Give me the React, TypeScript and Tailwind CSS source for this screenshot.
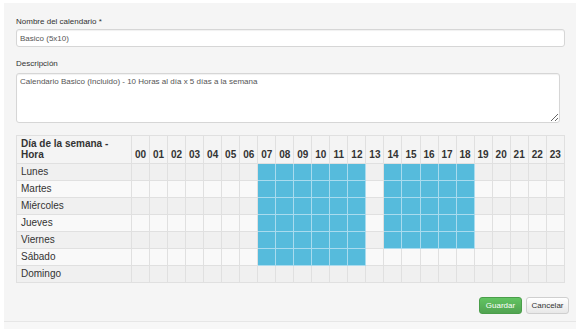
import React from "react";

const days = ["Lunes", "Martes", "Miércoles", "Jueves", "Viernes", "Sábado", "Domingo"];
const hours = Array.from({ length: 24 }, (_, i) => (i < 10 ? "0" + i : "" + i));

function isOn(d: number, h: number) {
  if (d <= 5 && h >= 7 && h <= 12) return true;
  if (d <= 4 && h >= 14 && h <= 18) return true;
  return false;
}

export default function App() {
  return (
    <div
      className="w-[580px] h-[329px] bg-white pt-[3px] px-[4px] overflow-hidden text-[#333]"
      style={{ fontFamily: '"Liberation Sans", Arial, sans-serif' }}
    >
      <div className="bg-[#f5f5f5] h-[318px] pl-[12px] pr-[11px] pt-[14px] flex flex-col">
        <div className="text-[8px] leading-[10px] text-[#333]">Nombre del calendario *</div>
        <input
          className="mt-[2px] h-[18px] w-full bg-white border border-[#d6d6d6] rounded-[3px] px-[3px] text-[8px] text-[#555] shadow-[inset_0_1px_1px_rgba(0,0,0,0.06)] outline-none"
          defaultValue="Basico (5x10)"
        />
        <div className="mt-[12px] text-[8px] leading-[10px] text-[#333]">Descripción</div>
        <textarea
          className="mt-[4px] h-[50px] w-[544px] bg-white border border-[#d6d6d6] rounded-[3px] px-[3px] py-[3px] text-[8px] leading-[10px] text-[#555] shadow-[inset_0_1px_1px_rgba(0,0,0,0.06)] outline-none resize"
          defaultValue="Calendario Basico (Incluido) - 10 Horas al día x 5 días a la semana"
        />
        <table className="mt-[12px] w-full table-fixed border-collapse border border-[#dddddd]">
          <colgroup>
            <col className="w-[115px]" />
            {hours.map((h) => (
              <col key={h} />
            ))}
          </colgroup>
          <thead>
            <tr className="h-[28px] bg-[#f4f4f4]">
              <th className="border border-[#e0e0e0] text-left align-bottom px-[4px] pb-[3px] text-[10px] leading-[10.5px] font-bold text-[#333]">
                Día de la semana -<br />Hora
              </th>
              {hours.map((h) => (
                <th
                  key={h}
                  className="border border-[#e0e0e0] text-center align-bottom pb-[3px] text-[10px] leading-[11px] font-bold text-[#333]"
                >
                  {h}
                </th>
              ))}
            </tr>
          </thead>
          <tbody>
            {days.map((d, di) => (
              <tr key={d} className={di % 2 === 0 ? "h-[17px] bg-[#f0f0f0]" : "h-[17px] bg-[#f9f9f9]"}>
                <td className="border border-[#e0e0e0] px-[4px] text-[10px] leading-[12px] text-[#333] align-middle">
                  {d}
                </td>
                {hours.map((h, hi) =>
                  isOn(di, hi) ? (
                    <td key={h} className="border border-[#a9dbee] bg-[#56bbdc]" />
                  ) : (
                    <td key={h} className="border border-[#e0e0e0]" />
                  )
                )}
              </tr>
            ))}
          </tbody>
        </table>
        <div className="mt-[14px] flex justify-end gap-[4px] mr-[-4px]">
          <button className="h-[17px] w-[43px] rounded-[3px] border border-[#4a9e4a] bg-gradient-to-b from-[#62c462] to-[#51a351] text-white text-[8px] leading-[15px]">
            Guardar
          </button>
          <button className="h-[17px] w-[43px] rounded-[3px] border border-[#cfcfcf] bg-gradient-to-b from-white to-[#e8e8e8] text-[#333] text-[8px] leading-[15px]">
            Cancelar
          </button>
        </div>
      </div>
      <div className="h-[8px] border-t border-[#e6e6e6] bg-[#f7f7f7]" />
    </div>
  );
}
